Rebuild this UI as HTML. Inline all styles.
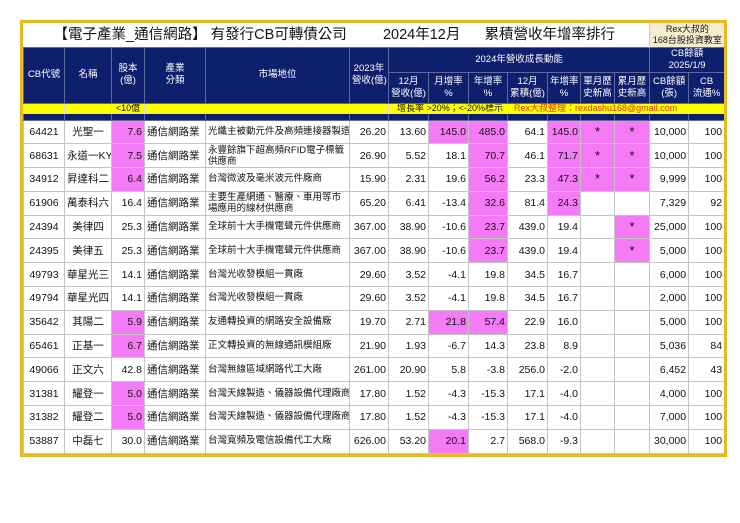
<!DOCTYPE html>
<html><head><meta charset="utf-8"><style>
*{margin:0;padding:0;box-sizing:border-box}
body{width:740px;height:523px;background:#fff;font-family:"Liberation Sans","Noto Sans CJK TC",sans-serif;position:relative;overflow:hidden}
#f{position:absolute;left:20px;top:20px;width:707px;height:437px;border:3px solid #e8b923;background:#fff;overflow:hidden}
table{border-collapse:collapse;table-layout:fixed;position:absolute;left:0;top:0;width:701px}
td{border:1px solid #c4c4c4;font-size:10.5px;color:#111;padding:0 2px;white-space:nowrap;overflow:hidden;line-height:12px}
.h td{background:#0e1f6e;color:#fff;text-align:center;border-color:#5a6aa0;font-size:9.5px;line-height:12px}
.t td{border:none;height:24px;font-size:14.5px;background:#fff}
.r td{height:23.8px}
.c{text-align:center}.n{text-align:right}
.p{background:#f57af5}
.y td{background:#ffff00;height:9px;font-size:9px;line-height:9px;border-color:#ddd}
.b td{background:#0e1f6e;height:7px;border-color:#5a6aa0}
.k{font-size:9.5px}
.m{white-space:normal;font-size:9.5px;line-height:11px}
.s{text-align:center;font-size:13px}
</style></head><body><div id="f">
<table>
<colgroup><col style="width:41px"><col style="width:47px"><col style="width:33px"><col style="width:61px"><col style="width:144px"><col style="width:39px"><col style="width:40px"><col style="width:40px"><col style="width:39px"><col style="width:40px"><col style="width:33px"><col style="width:34px"><col style="width:35px"><col style="width:39px"><col style="width:36px"></colgroup>
<tr class="t"><td colspan="13" style="padding-left:30px">【電子產業_通信網路】 有發行CB可轉債公司 &nbsp; &nbsp; &nbsp; &nbsp; 2024年12月 &nbsp; &nbsp; &nbsp;累積營收年增率排行</td><td colspan="2" style="background:#f6edcf;font-size:9px;text-align:center;line-height:11px;border-left:1px solid #ccc">Rex大叔的<br>168台股投資教室</td></tr>
<tr class="h"><td rowspan="2">CB代號</td><td rowspan="2">名稱</td><td rowspan="2">股本<br>(億)</td><td rowspan="2">產業<br>分類</td><td rowspan="2">市場地位</td><td rowspan="2">2023年<br>營收(億)</td><td colspan="7" style="height:22px">2024年營收成長動能</td><td colspan="2">CB餘額<br>2025/1/9</td></tr>
<tr class="h"><td style="height:31px">12月<br>營收(億)</td><td>月增率<br>%</td><td>年增率<br>%</td><td>12月<br>累積(億)</td><td>年增率<br>%</td><td>單月歷<br>史新高</td><td>累月歷<br>史新高</td><td>CB餘額<br>(張)</td><td>CB<br>流通%</td></tr>
<tr class="y"><td></td><td></td><td class="c">&lt;10億</td><td></td><td></td><td></td><td colspan="3" style="padding-left:8px">增長率 &gt;20%；&lt;-20%標示</td><td colspan="6" style="color:#e0301e;text-align:left;padding-left:6px">Rex大叔整理：rexdashu168@gmail.com</td></tr>
<tr class="b"><td></td><td></td><td></td><td></td><td></td><td></td><td></td><td></td><td></td><td></td><td></td><td></td><td></td><td></td><td></td></tr>
<tr class="r"><td class="c">64421</td><td class="c">光聖一</td><td class="n p">7.6</td><td>通信網路業</td><td class="k">光纖主被動元件及高頻連接器製造商</td><td class="n">26.20</td><td class="n">13.60</td><td class="n p">145.0</td><td class="n p">485.0</td><td class="n">64.1</td><td class="n p">145.0</td><td class="s p">*</td><td class="s p">*</td><td class="n">10,000</td><td class="n">100</td></tr>
<tr class="r"><td class="c">68631</td><td class="c">永道一KY</td><td class="n p">7.5</td><td>通信網路業</td><td class="m">永豐餘旗下超高頻RFID電子標籤供應商</td><td class="n">26.90</td><td class="n">5.52</td><td class="n">18.1</td><td class="n p">70.7</td><td class="n">46.1</td><td class="n p">71.7</td><td class="s p">*</td><td class="s p">*</td><td class="n">10,000</td><td class="n">100</td></tr>
<tr class="r"><td class="c">34912</td><td class="c">昇達科二</td><td class="n p">6.4</td><td>通信網路業</td><td class="k">台灣微波及毫米波元件廠商</td><td class="n">15.90</td><td class="n">2.31</td><td class="n">19.6</td><td class="n p">56.2</td><td class="n">23.3</td><td class="n p">47.3</td><td class="s p">*</td><td class="s p">*</td><td class="n">9,999</td><td class="n">100</td></tr>
<tr class="r"><td class="c">61906</td><td class="c">萬泰科六</td><td class="n">16.4</td><td>通信網路業</td><td class="m">主要生產網通、醫療、車用等市場應用的線材供應商</td><td class="n">65.20</td><td class="n">6.41</td><td class="n">-13.4</td><td class="n p">32.6</td><td class="n">81.4</td><td class="n p">24.3</td><td></td><td></td><td class="n">7,329</td><td class="n">92</td></tr>
<tr class="r"><td class="c">24394</td><td class="c">美律四</td><td class="n">25.3</td><td>通信網路業</td><td class="k">全球前十大手機電聲元件供應商</td><td class="n">367.00</td><td class="n">38.90</td><td class="n">-10.6</td><td class="n p">23.7</td><td class="n">439.0</td><td class="n">19.4</td><td></td><td class="s p">*</td><td class="n">25,000</td><td class="n">100</td></tr>
<tr class="r"><td class="c">24395</td><td class="c">美律五</td><td class="n">25.3</td><td>通信網路業</td><td class="k">全球前十大手機電聲元件供應商</td><td class="n">367.00</td><td class="n">38.90</td><td class="n">-10.6</td><td class="n p">23.7</td><td class="n">439.0</td><td class="n">19.4</td><td></td><td class="s p">*</td><td class="n">5,000</td><td class="n">100</td></tr>
<tr class="r"><td class="c">49793</td><td class="c">華星光三</td><td class="n">14.1</td><td>通信網路業</td><td class="k">台灣光收發模組一貫廠</td><td class="n">29.60</td><td class="n">3.52</td><td class="n">-4.1</td><td class="n">19.8</td><td class="n">34.5</td><td class="n">16.7</td><td></td><td></td><td class="n">6,000</td><td class="n">100</td></tr>
<tr class="r"><td class="c">49794</td><td class="c">華星光四</td><td class="n">14.1</td><td>通信網路業</td><td class="k">台灣光收發模組一貫廠</td><td class="n">29.60</td><td class="n">3.52</td><td class="n">-4.1</td><td class="n">19.8</td><td class="n">34.5</td><td class="n">16.7</td><td></td><td></td><td class="n">2,000</td><td class="n">100</td></tr>
<tr class="r"><td class="c">35642</td><td class="c">其陽二</td><td class="n p">5.9</td><td>通信網路業</td><td class="k">友通轉投資的網路安全設備廠</td><td class="n">19.70</td><td class="n">2.71</td><td class="n p">21.8</td><td class="n p">57.4</td><td class="n">22.9</td><td class="n">16.0</td><td></td><td></td><td class="n">5,000</td><td class="n">100</td></tr>
<tr class="r"><td class="c">65461</td><td class="c">正基一</td><td class="n p">6.7</td><td>通信網路業</td><td class="k">正文轉投資的無線通訊模組廠</td><td class="n">21.90</td><td class="n">1.93</td><td class="n">-6.7</td><td class="n">14.3</td><td class="n">23.8</td><td class="n">8.9</td><td></td><td></td><td class="n">5,036</td><td class="n">84</td></tr>
<tr class="r"><td class="c">49066</td><td class="c">正文六</td><td class="n">42.8</td><td>通信網路業</td><td class="k">台灣無線區域網路代工大廠</td><td class="n">261.00</td><td class="n">20.90</td><td class="n">5.8</td><td class="n">-3.8</td><td class="n">256.0</td><td class="n">-2.0</td><td></td><td></td><td class="n">6,452</td><td class="n">43</td></tr>
<tr class="r"><td class="c">31381</td><td class="c">耀登一</td><td class="n p">5.0</td><td>通信網路業</td><td class="k">台灣天線製造、儀器設備代理廠商</td><td class="n">17.80</td><td class="n">1.52</td><td class="n">-4.3</td><td class="n">-15.3</td><td class="n">17.1</td><td class="n">-4.0</td><td></td><td></td><td class="n">4,000</td><td class="n">100</td></tr>
<tr class="r"><td class="c">31382</td><td class="c">耀登二</td><td class="n p">5.0</td><td>通信網路業</td><td class="k">台灣天線製造、儀器設備代理廠商</td><td class="n">17.80</td><td class="n">1.52</td><td class="n">-4.3</td><td class="n">-15.3</td><td class="n">17.1</td><td class="n">-4.0</td><td></td><td></td><td class="n">7,000</td><td class="n">100</td></tr>
<tr class="r"><td class="c">53887</td><td class="c">中磊七</td><td class="n">30.0</td><td>通信網路業</td><td class="k">台灣寬頻及電信設備代工大廠</td><td class="n">626.00</td><td class="n">53.20</td><td class="n p">20.1</td><td class="n">2.7</td><td class="n">568.0</td><td class="n">-9.3</td><td></td><td></td><td class="n">30,000</td><td class="n">100</td></tr>
</table></div></body></html>
